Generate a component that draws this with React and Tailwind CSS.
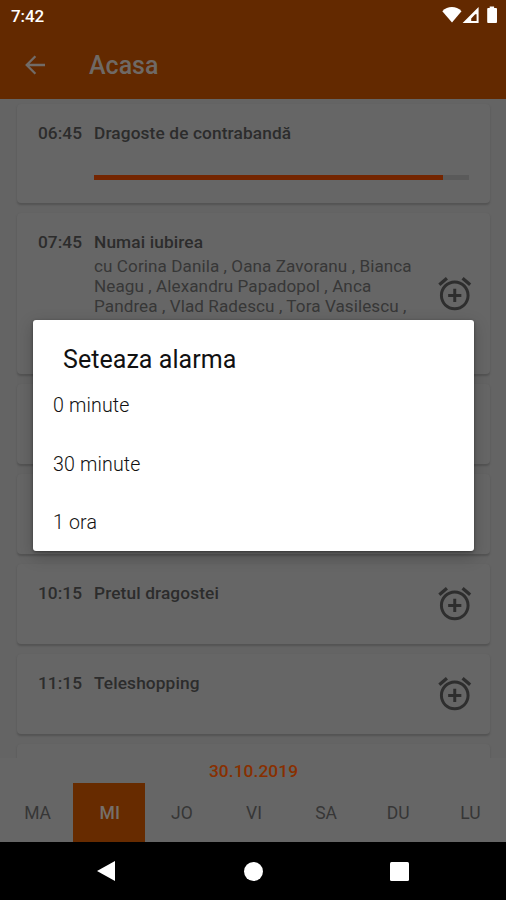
import clsx from 'clsx'

const shows = [
  { time: '06:45', title: 'Dragoste de contrabandă', progress: 93, size: 'h-[99px]' },
  {
    time: '07:45',
    title: 'Numai iubirea',
    cast: [
      'cu Corina Danila , Oana Zavoranu , Bianca',
      'Neagu , Alexandru Papadopol , Anca',
      'Pandrea , Vlad Radescu , Tora Vasilescu ,',
    ],
    size: 'h-[161px]',
  },
  { time: '', title: '', size: 'h-20' },
  { time: '', title: '', size: 'h-20' },
  { time: '10:15', title: 'Pretul dragostei', size: 'h-20' },
  { time: '11:15', title: 'Teleshopping', size: 'h-20' },
  { time: '', title: '', size: 'h-20' },
]

const days = ['MA', 'MI', 'JO', 'VI', 'SA', 'DU', 'LU']
const choices = ['0 minute', '30 minute', '1 ora']

function AlarmIcon() {
  return (
    <svg viewBox="0 0 24 24" className="size-[39.5px] fill-[#2e2e2e]">
      <path d="M7.88 3.39 6.6 1.86 2 5.71l1.29 1.53 4.59-3.85zM22 5.72l-4.6-3.86-1.29 1.53 4.6 3.86L22 5.72zM12 4c-4.97 0-9 4.03-9 9s4.02 9 9 9c4.97 0 9-4.03 9-9s-4.03-9-9-9zm0 16.2c-3.98 0-7.2-3.22-7.2-7.2s3.22-7.2 7.2-7.2 7.2 3.22 7.2 7.2-3.22 7.2-7.2 7.2zm.9-11.2h-1.8v3.1H8v1.8h3.1V17h1.8v-3.1H16v-1.8h-3.1V9z" />
    </svg>
  )
}

function StatusBar() {
  return (
    <div className="h-8 pl-[11px] pr-[7px] flex items-center justify-between text-white">
      <span className="text-[17px] font-medium leading-none tracking-[-0.1px]">7:42</span>
      <svg viewBox="0 0 57 18" className="w-[57px] h-[18px] -mt-[2px] fill-white">
        <path d="M.3 5.2C5.6-.3 14.2-.3 19.5 5.2L10 16.4z" />
        <path fillRule="evenodd" d="M20.6 17 36.6 1v16zM29.2 15h5.4V8.2h-1.4l-4 4.2z" />
        <path d="M45.2 3.2c0-.7.4-1.2 1.2-1.2h1.3V.6h4.4V2h1.7c.8 0 1.2.5 1.2 1.2v12.6c0 .8-.4 1.2-1.2 1.2h-7.4c-.8 0-1.2-.4-1.2-1.2z" />
      </svg>
    </div>
  )
}

function ShowCard({ show }) {
  const { time, title, cast, progress, size } = show
  return (
    <div
      className={clsx(
        'shrink-0 flex rounded-[4px] bg-[#666666] pl-[21px] pr-[16px] shadow-[0_1.5px_2px_rgba(0,0,0,0.17)]',
        size
      )}
    >
      <span className="w-[56px] shrink-0 pt-[19px] text-[17.3px] leading-5 font-medium tracking-[0.05px]">
        {time}
      </span>
      <div className="flex-1 pt-[19px]">
        <p className="text-[17.3px] leading-5 font-medium tracking-[0.12px] whitespace-nowrap">{title}</p>
        {cast && (
          <div className="mt-[4px] text-[17.1px] leading-5 tracking-[0.08px] text-[#373737] whitespace-nowrap">
            {cast.map((line) => (
              <p key={line}>{line}</p>
            ))}
          </div>
        )}
        {progress && (
          <div className="mt-[31.5px] mr-[5px] h-[5px] bg-[#5a5a5a]">
            <div className="h-full bg-[#742500]" style={{ width: `${progress}%` }} />
          </div>
        )}
      </div>
      {!progress && (
        <div className="shrink-0 flex items-center">
          <AlarmIcon />
        </div>
      )}
    </div>
  )
}

function AlarmDialog() {
  return (
    <div className="absolute left-[33px] top-[320px] w-[441px] h-[231px] rounded-[3px] bg-white shadow-[0_5px_16px_1px_rgba(0,0,0,0.2),0_1px_3px_rgba(0,0,0,0.4)]">
      <h2 className="pl-[30px] pt-[24px] text-[25px] leading-8 font-normal tracking-[0.05px] text-[#111111]">
        Seteaza alarma
      </h2>
      <ul className="pl-[20px] pt-[0.5px] text-[19.6px] font-light tracking-[0.15px] text-[#111111]">
        {choices.map((c) => (
          <li key={c} className="h-[58.5px] flex items-center">
            {c}
          </li>
        ))}
      </ul>
    </div>
  )
}

export default function App() {
  return (
    <div className="relative w-[506px] h-[900px] overflow-hidden flex flex-col bg-[#646464] font-[Roboto,sans-serif] text-[#2c2c2c]">
      <header className="h-[98.5px] shrink-0 bg-[#632900]">
        <StatusBar />
        <div className="h-[66px] pl-[25px] flex items-center gap-[44px]">
          <svg viewBox="0 0 20 20" className="size-5 fill-none stroke-[#716b67] stroke-[2.3]">
            <path d="M20 10H2.2M10.4 1.2 1.7 10l8.7 8.8" />
          </svg>
          <h1 className="pt-[2px] text-[25px] font-medium text-[#6f6965]">Acasa</h1>
        </div>
      </header>

      <main className="flex-1 min-h-0 overflow-hidden flex flex-col gap-[10px] px-[17px] pr-[16px] pt-[5.5px]">
        {shows.map((show, i) => (
          <ShowCard key={i} show={show} />
        ))}
      </main>

      <footer className="h-[84px] shrink-0 bg-[#666666] flex flex-col">
        <p className="h-[24.5px] pt-[3px] flex items-center justify-center pl-[1px] text-[17.3px] font-medium tracking-[0.1px] text-[#882f00]">
          30.10.2019
        </p>
        <div className="flex-1 pl-[1px] grid grid-cols-7">
          {days.map((d) => (
            <span
              key={d}
              className={clsx(
                'flex items-center justify-center pt-[1px] pl-[1px] text-[17.5px]',
                d === 'MI' ? 'bg-[#672b00] text-[#76706b] font-medium' : 'text-[#363636]'
              )}
            >
              {d}
            </span>
          ))}
        </div>
      </footer>

      <nav className="h-[58px] shrink-0 bg-black flex items-center justify-between pl-[97px] pr-[97px]">
        <svg viewBox="0 0 20 22" className="w-[18px] h-[22px] fill-white">
          <path d="M0 11 20 0v22z" />
        </svg>
        <span className="ml-[1px] size-[19px] rounded-full bg-white" />
        <span className="size-[19px] rounded-[1.5px] bg-white" />
      </nav>

      <AlarmDialog />
    </div>
  )
}
